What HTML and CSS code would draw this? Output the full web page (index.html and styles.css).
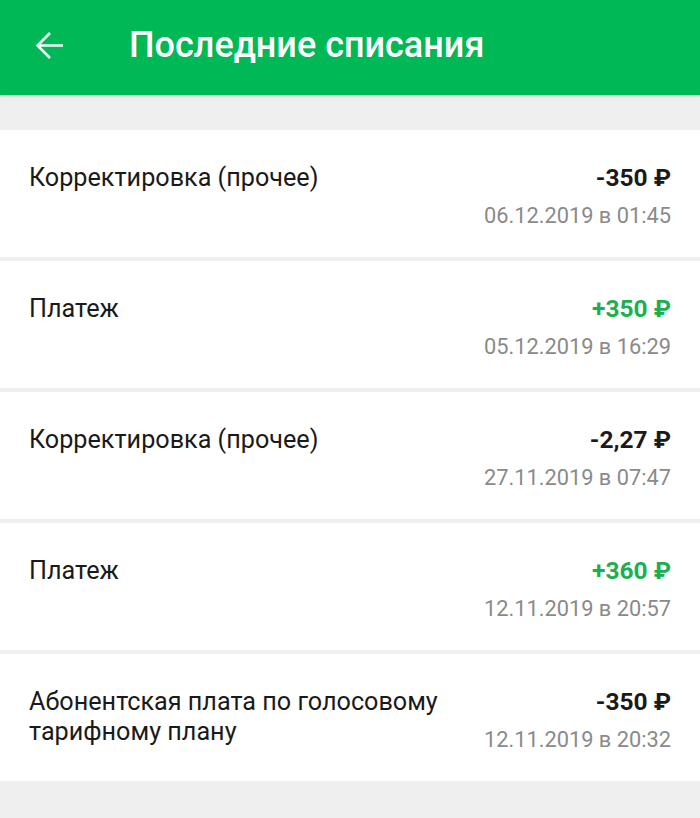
FILE: index.html
```html
<!DOCTYPE html>
<html lang="ru">
<head>
<meta charset="utf-8">
<link rel="stylesheet" href="styles.css">
</head>
<body>
<header class="bar">
  <svg class="back" width="30" height="30" viewBox="0 0 30 30">
    <path d="M28 14.5H3M15 2L2.5 14.5L15 27" fill="none" stroke="#fff" stroke-width="2.6" stroke-linecap="butt" stroke-linejoin="miter"/>
  </svg>
  <h1 class="title">Последние списания</h1>
</header>
<main class="list">
  <div class="card">
    <div class="name">Корректировка (прочее)</div>
    <div class="side"><div class="amount">-350 ₽</div><div class="date">06.12.2019 в 01:45</div></div>
  </div>
  <div class="card">
    <div class="name">Платеж</div>
    <div class="side"><div class="amount plus">+350 ₽</div><div class="date">05.12.2019 в 16:29</div></div>
  </div>
  <div class="card">
    <div class="name">Корректировка (прочее)</div>
    <div class="side"><div class="amount">-2,27 ₽</div><div class="date">27.11.2019 в 07:47</div></div>
  </div>
  <div class="card">
    <div class="name">Платеж</div>
    <div class="side"><div class="amount plus">+360 ₽</div><div class="date">12.11.2019 в 20:57</div></div>
  </div>
  <div class="card">
    <div class="name">Абонентская плата по голосовому тарифному плану</div>
    <div class="side"><div class="amount">-350 ₽</div><div class="date">12.11.2019 в 20:32</div></div>
  </div>
</main>
</body>
</html>
```
FILE: styles.css
```css
html, body {
  margin: 0;
  padding: 0;
  background: #efefef;
  font-family: Roboto, "Liberation Sans", sans-serif;
}
.bar {
  height: 95px;
  background: #00b956;
  display: flex;
  align-items: center;
  box-shadow: 0 1px 3px rgba(0,0,0,0.15);
  position: relative;
}
.back {
  margin-left: 35px;
  margin-top: -3px;
  flex: none;
}
.title {
  margin: 0 0 0 64px;
  color: #fff;
  font-size: 36px;
  font-weight: 500;
  line-height: 40px;
  margin-top: -6px;
}
.list {
  padding-top: 35px;
  display: flex;
  flex-direction: column;
  gap: 4px;
}
.card {
  background: #fff;
  height: 127px;
  box-sizing: border-box;
  padding: 33px 29px 0 29px;
  display: flex;
  justify-content: space-between;
  align-items: flex-start;
}
.name {
  font-size: 25.2px;
  line-height: 30px;
  color: #1a1a1a;
  max-width: 430px;
}
.side {
  text-align: right;
  flex: none;
}
.amount {
  font-size: 24.5px;
  font-weight: 700;
  line-height: 30px;
  color: #1a1a1a;
}
.amount.plus {
  color: #1aaf52;
}
.date {
  margin-top: 8px;
  font-size: 21.8px;
  line-height: 30px;
  color: #8a8a8a;
}
```
